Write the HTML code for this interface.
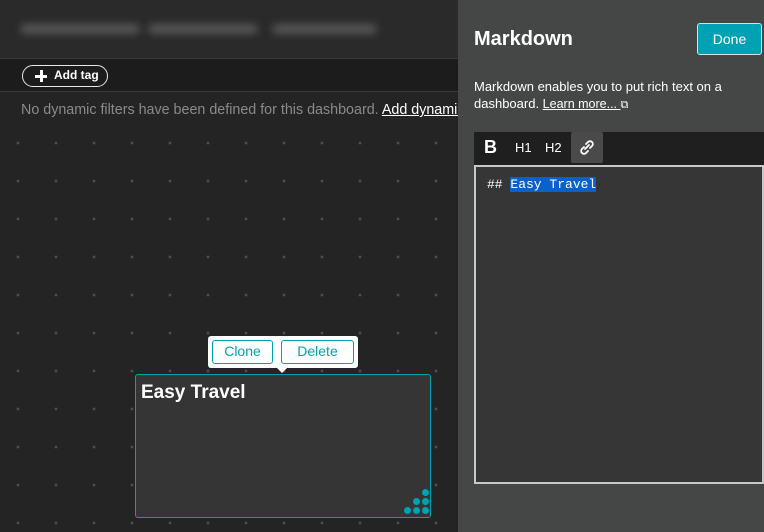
<!DOCTYPE html>
<html><head><meta charset="utf-8"><style>
*{box-sizing:border-box;margin:0;padding:0}
body{width:764px;height:532px;overflow:hidden;background:#242424;font-family:"Liberation Sans",sans-serif;position:relative}
.grid{position:absolute;left:0;top:130px;width:458px;height:402px;background-image:linear-gradient(#242424 0,#242424 0),radial-gradient(circle,#4c4c4c 1.4px,transparent 1.5px);background-size:0 0,38px 38px;background-position:0 0,-1px -6px}
.hdr{position:absolute;left:0;top:0;width:458px;height:59px;background:#2a2a2a;border-bottom:1px solid #3a3a3a}
.blur{position:absolute;top:24px;height:10px;background:#555;filter:blur(4px);border-radius:5px}
.tagbar{position:absolute;left:0;top:59px;width:458px;height:33px;background:#1c1c1c;border-bottom:1px solid #3a3a3a}
.addtag{position:absolute;left:22px;top:65px;width:86px;height:22px;border:1.5px solid #e8e8e8;border-radius:11px;color:#fff;font-size:12px;font-weight:bold;line-height:19px;padding-left:31px}
.plus{position:absolute;left:12px;top:4px;width:12px;height:12px}
.plus:before{content:"";position:absolute;left:5px;top:0;width:2.5px;height:12px;background:#fff}
.plus:after{content:"";position:absolute;left:0;top:5px;width:12px;height:2.5px;background:#fff}
.nof{position:absolute;left:21px;top:102px;color:#8a8a8a;font-size:14.3px;white-space:nowrap;width:437px;overflow:hidden}
.nof u{color:#fff}
.tile{position:absolute;left:135px;top:374px;width:296px;height:144px;background:#353535;border:1px solid #00a1b2;border-radius:3px}
.tile h2{position:absolute;left:5px;top:7px;color:#fff;font-size:19px;font-weight:bold}
.dot{position:absolute;width:7px;height:7px;border-radius:50%;background:#00a1b2}
.pop{position:absolute;left:208px;top:336px;width:150px;height:32px;background:#fff;border-radius:3px}
.pop:after{content:"";position:absolute;left:69px;bottom:-5px;border:5px solid transparent;border-top-color:#fff;border-bottom:0}
.pb{position:absolute;top:4px;height:24px;border:1.5px solid #00a1b2;border-radius:3px;color:#00a1b2;font-size:14px;text-align:center;line-height:21px}
.panel{position:absolute;left:458px;top:0;width:306px;height:532px;background:#454746}
.panel h1{position:absolute;left:16px;top:28px;color:#fff;font-size:20px;font-weight:bold}
.done{position:absolute;left:239px;top:23px;width:65px;height:32px;background:#00a1b2;border:1px solid #ddd;border-radius:3px;color:#fff;font-size:14px;text-align:center;line-height:30px}
.desc{position:absolute;left:16px;top:78px;color:#fff;font-size:13px;line-height:17px;width:290px}
.desc u{font-size:12.5px}
.tb{position:absolute;left:16px;top:132px;width:290px;height:33px;background:#1f1f1f;color:#fff}
.tb span{position:absolute;top:8px;font-size:13px}
.lk{position:absolute;left:97px;top:0;width:32px;height:31px;background:#4a4a4a;border-radius:2px}
.ta{position:absolute;left:16px;top:165px;width:290px;height:319px;background:#363636;border:2px solid #c8c8c8}
.code{position:absolute;left:11px;top:10px;color:#fff;font-family:"Liberation Mono",monospace;font-size:13px}
.sel{background:#0a61c9}
</style></head><body>
<div class="hdr">
<div class="blur" style="left:20px;width:120px"></div>
<div class="blur" style="left:148px;width:110px"></div>
<div class="blur" style="left:272px;width:105px"></div>
</div>
<div class="tagbar"></div>
<div class="addtag"><div class="plus"></div>Add tag</div>
<div class="grid"></div>
<div class="nof">No dynamic filters have been defined for this dashboard. <u>Add dynamic filters</u></div>
<div class="tile"><h2>Easy Travel</h2>
<div class="dot" style="left:286px;top:114px"></div>
<div class="dot" style="left:277px;top:123px"></div><div class="dot" style="left:286px;top:123px"></div>
<div class="dot" style="left:268px;top:132px"></div><div class="dot" style="left:277px;top:132px"></div><div class="dot" style="left:286px;top:132px"></div>
</div>
<div class="pop"><div class="pb" style="left:4px;width:61px">Clone</div><div class="pb" style="left:73px;width:73px">Delete</div></div>
<div class="panel">
<h1>Markdown</h1>
<div class="done">Done</div>
<div class="desc">Markdown enables you to put rich text on a dashboard. <u>Learn more... </u> <span style="font-size:11px">&#x29C9;</span></div>
<div class="tb">
<span style="left:10px;top:5px;font-size:18px;font-weight:bold">B</span>
<span style="left:41px">H1</span><span style="left:71px">H2</span>
<div class="lk"><svg width="32" height="31" viewBox="0 0 32 31"><g fill="none" stroke="#fff" stroke-width="1.8" stroke-linecap="round"><path d="M15 12l2-2a2.8 2.8 0 0 1 4 4l-2 2"/><path d="M17 19l-2 2a2.8 2.8 0 0 1-4-4l2-2"/><path d="M14 17l4-4"/></g></svg></div>
</div>
<div class="ta"><div class="code">## <span class="sel">Easy Travel</span></div></div>
</div>
</body></html>
